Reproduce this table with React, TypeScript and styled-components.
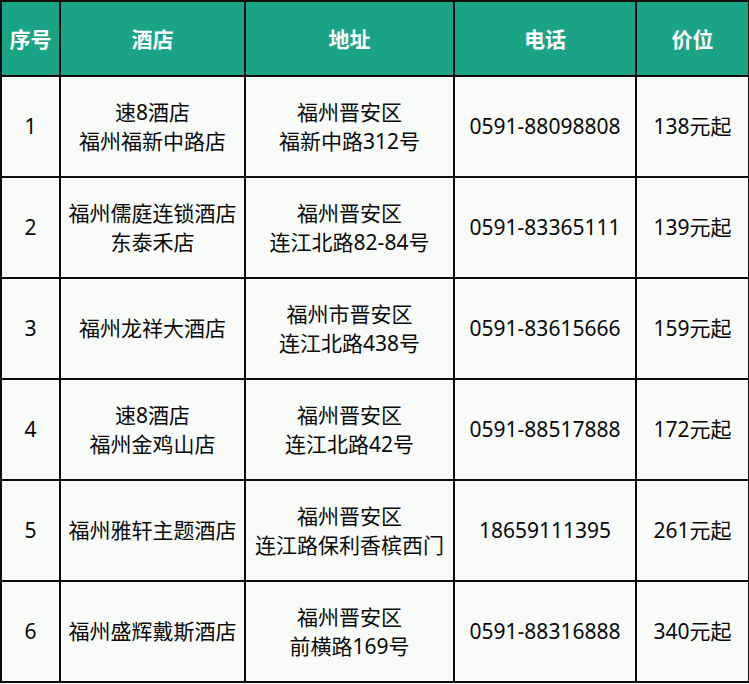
import React from "react";
import styled, { createGlobalStyle } from "styled-components";

const GlobalStyle = createGlobalStyle`
  html, body { margin: 0; padding: 0; background: #ffffff; }
  body { font-family: "Noto Sans", "Noto Sans CJK SC", sans-serif; }
`;

const Table = styled.table`
  border-collapse: collapse;
  table-layout: fixed;
  width: 748px;
  background: #f8fbf8;
  color: #0a0a0a;
`;

const HeadRow = styled.tr`
  height: 75px;
  background: #1ba385;
`;

const HeadCell = styled.th`
  border: 2px solid #0d0d0d;
  color: #ffffff;
  font-family: "Noto Sans CJK SC", sans-serif;
  font-weight: 700;
  font-size: 21px;
  text-align: center;
  vertical-align: middle;
  padding: 0 0 2px;
`;

const BodyRow = styled.tr`
  height: 101px;
`;

const Cell = styled.td`
  border: 2px solid #0d0d0d;
  font-size: 21px;
  line-height: 29px;
  text-align: center;
  vertical-align: middle;
  padding: 0 2px;
  white-space: nowrap;
`;

const Line = styled.div``;

const columns = [
  { title: "序号", width: 59 },
  { title: "酒店", width: 185 },
  { title: "地址", width: 209 },
  { title: "电话", width: 182 },
  { title: "价位", width: 113 },
];

const rows: { no: string; hotel: string[]; addr: string[]; tel: string; price: string }[] = [
  { no: "1", hotel: ["速8酒店", "福州福新中路店"], addr: ["福州晋安区", "福新中路312号"], tel: "0591-88098808", price: "138元起" },
  { no: "2", hotel: ["福州儒庭连锁酒店", "东泰禾店"], addr: ["福州晋安区", "连江北路82-84号"], tel: "0591-83365111", price: "139元起" },
  { no: "3", hotel: ["福州龙祥大酒店"], addr: ["福州市晋安区", "连江北路438号"], tel: "0591-83615666", price: "159元起" },
  { no: "4", hotel: ["速8酒店", "福州金鸡山店"], addr: ["福州晋安区", "连江北路42号"], tel: "0591-88517888", price: "172元起" },
  { no: "5", hotel: ["福州雅轩主题酒店"], addr: ["福州晋安区", "连江路保利香槟西门"], tel: "18659111395", price: "261元起" },
  { no: "6", hotel: ["福州盛辉戴斯酒店"], addr: ["福州晋安区", "前横路169号"], tel: "0591-88316888", price: "340元起" },
];

export default function App() {
  return (
    <>
      <GlobalStyle />
      <Table>
        <colgroup>
          {columns.map((c) => (
            <col key={c.title} style={{ width: c.width }} />
          ))}
        </colgroup>
        <thead>
          <HeadRow>
            {columns.map((c) => (
              <HeadCell key={c.title}>{c.title}</HeadCell>
            ))}
          </HeadRow>
        </thead>
        <tbody>
          {rows.map((r) => (
            <BodyRow key={r.no}>
              <Cell>{r.no}</Cell>
              <Cell>
                {r.hotel.map((l) => (
                  <Line key={l}>{l}</Line>
                ))}
              </Cell>
              <Cell>
                {r.addr.map((l) => (
                  <Line key={l}>{l}</Line>
                ))}
              </Cell>
              <Cell>{r.tel}</Cell>
              <Cell>{r.price}</Cell>
            </BodyRow>
          ))}
        </tbody>
      </Table>
    </>
  );
}
